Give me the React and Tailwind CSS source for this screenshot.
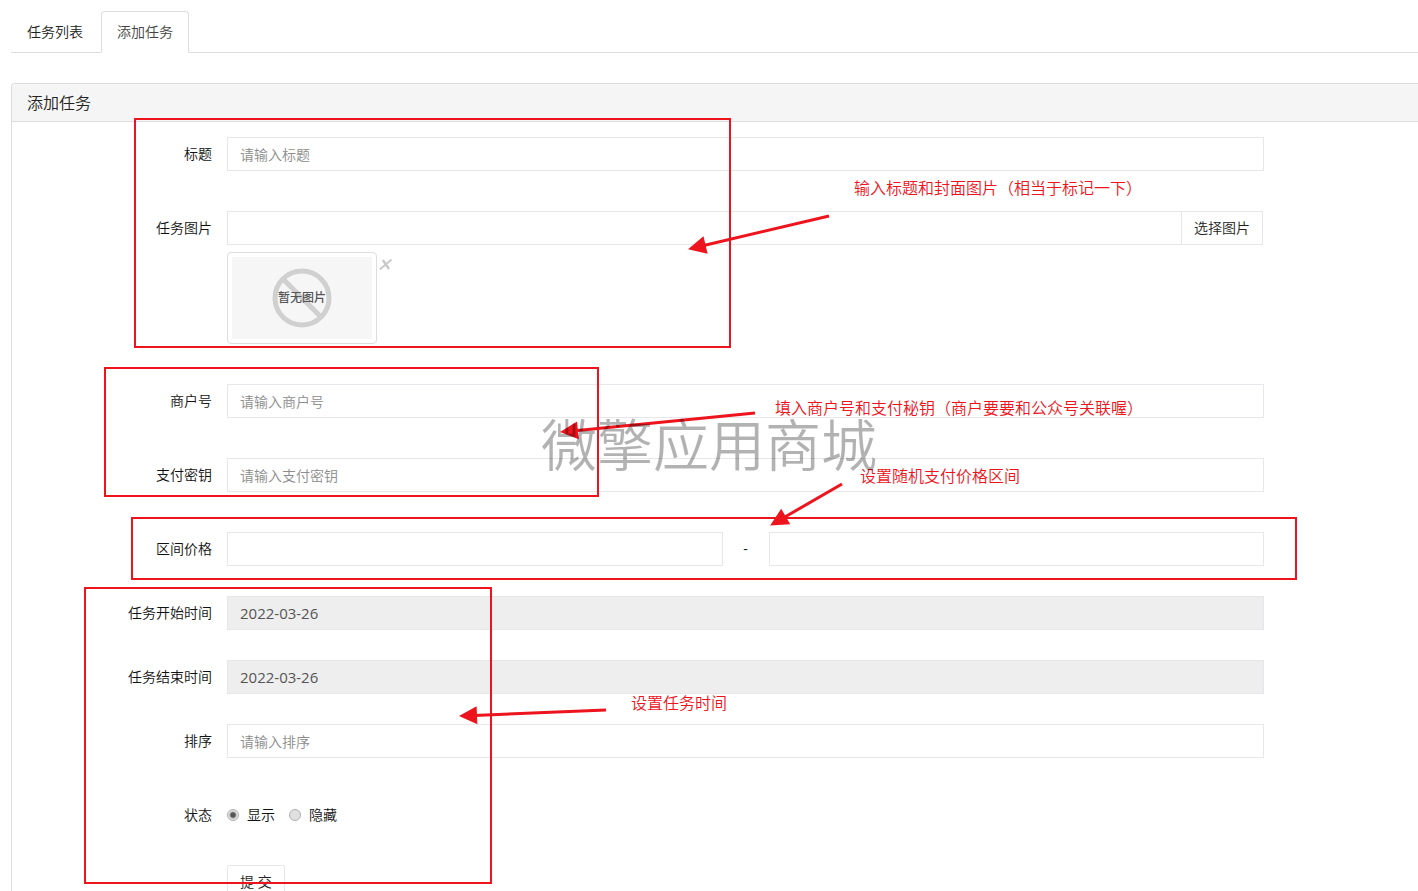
import React from 'react';

const inputClass =
  'block h-[34px] w-full min-w-0 border border-[#e7e7eb] bg-white px-3 text-sm text-[#555] outline-none placeholder:text-[#8c8c8c]';
const dateClass =
  'block h-[34px] w-full border border-[#e7e7eb] bg-[#eee] px-3 text-[15px] font-normal text-[#555] outline-none';
const radioClass =
  'h-3 w-3 shrink-0 appearance-none rounded-full border border-[#b0b0b0] bg-[#e0e0e0] checked:bg-[radial-gradient(circle,#555_0_2px,#e2e2e2_4px)]';

const Row = ({ label, htmlFor, className, children }) => (
  <div className={`flex items-start gap-[15px] ${className}`}>
    <label htmlFor={htmlFor} className="w-[200px] shrink-0 text-right text-sm leading-[34px] text-[#111]">
      {label}
    </label>
    <div className="min-w-0 flex-1">{children}</div>
  </div>
);

const NoPicture = () => (
  <div className="relative flex h-[82px] w-[140px] items-center justify-center bg-[#f6f6f6]">
    <svg className="absolute inset-0 h-full w-full" viewBox="0 0 140 82" fill="none" stroke="#d0d0d0" strokeWidth="5">
      <circle cx="70" cy="41" r="27" />
      <path d="M51 22l38 38" />
    </svg>
    <span className="relative text-xs font-medium text-[#555]">暂无图片</span>
  </div>
);

const Arrow = ({ from, to }) => {
  const angle = Math.atan2(to[1] - from[1], to[0] - from[0]);
  const len = Math.hypot(to[0] - from[0], to[1] - from[1]) + 1;
  return (
    <g transform={`translate(${from[0]} ${from[1]}) rotate(${(angle * 180) / Math.PI})`}>
      <path d={`M0 0H${len - 15}`} stroke="#ed141d" strokeWidth="3" />
      <path d={`M${len} 0l-18 -9v18z`} fill="#ed141d" />
    </g>
  );
};

const Notes = () => (
  <div className="pointer-events-none absolute inset-0 text-base leading-6 text-[#ed141d]">
    <div className="absolute left-[134px] top-[118px] h-[230px] w-[597px] border-2 border-[#ed141d]" />
    <div className="absolute left-[104px] top-[367px] h-[130px] w-[495px] border-2 border-[#ed141d]" />
    <div className="absolute left-[131px] top-[517px] h-[63px] w-[1166px] border-2 border-[#ed141d]" />
    <div className="absolute left-[84px] top-[587px] h-[297px] w-[408px] border-2 border-[#ed141d]" />
    <svg className="absolute left-0 top-0" width="900" height="800">
      <Arrow from={[829, 216]} to={[689, 249]} />
      <Arrow from={[755, 413]} to={[561, 432]} />
      <Arrow from={[842, 484]} to={[771, 525]} />
      <Arrow from={[606, 710]} to={[460, 716]} />
    </svg>
    <p className="absolute left-[854px] top-[176px] whitespace-nowrap">输入标题和封面图片（相当于标记一下）</p>
    <p className="absolute left-[775px] top-[396px] whitespace-nowrap">填入商户号和支付秘钥（商户要要和公众号关联喔）</p>
    <p className="absolute left-[860px] top-[464px] whitespace-nowrap">设置随机支付价格区间</p>
    <p className="absolute left-[631px] top-[691px] whitespace-nowrap">设置任务时间</p>
    <p className="absolute left-[541px] top-[412px] whitespace-nowrap text-[56px] leading-[64px] text-black/30">
      微擎应用商城
    </p>
  </div>
);

export default function App() {
  return (
    <div className="relative h-screen overflow-hidden bg-white pl-[11px] pt-[11px] font-['Open_Sans','Noto_Sans_CJK_SC',sans-serif] font-[350] text-[#222]">
      <nav className="flex border-b border-[#ddd] text-sm leading-5">
        <a href="#list" className="-mb-px border border-transparent px-[15px] py-[10px]">
          任务列表
        </a>
        <a
          href="#add"
          className="-mb-px ml-[2px] rounded-t border border-[#ddd] border-b-white bg-white px-[15px] py-[10px] text-[#444]"
        >
          添加任务
        </a>
      </nav>

      <section className="mt-[30px] rounded-tl border-l border-t border-[#ddd]">
        <h1 className="rounded-tl border-b border-[#ddd] bg-[#f5f5f5] px-[15px] pb-[6px] pt-2 text-base leading-[23px]">
          添加任务
        </h1>
        <form className="pr-[154px] pt-[15px]" onSubmit={(e) => e.preventDefault()}>
          <Row label="标题" htmlFor="title" className="mb-10">
            <input id="title" type="text" placeholder="请输入标题" className={inputClass} />
          </Row>

          <Row label="任务图片" htmlFor="image" className="mb-10">
            <div className="flex pr-px">
              <input id="image" type="text" className={inputClass} />
              <button type="button" className="-ml-px h-[34px] shrink-0 border border-[#e7e7eb] bg-white px-3 text-sm">
                选择图片
              </button>
            </div>
            <div className="mt-[7px] flex items-start">
              <div className="rounded border border-[#ddd] p-1">
                <NoPicture />
              </div>
              <button type="button" aria-label="删除" className="ml-[2px] mt-[6px]">
                <svg width="14" height="13" viewBox="0 0 14 13" fill="none" stroke="#c8c8c8">
                  <path d="M12.5 1.5L0.8 11.5" strokeWidth="1.8" />
                  <path d="M3.8 2l6.2 9" strokeWidth="2.4" />
                </svg>
              </button>
            </div>
          </Row>

          <Row label="商户号" htmlFor="merchant" className="mb-10">
            <input id="merchant" type="text" placeholder="请输入商户号" className={inputClass} />
          </Row>

          <Row label="支付密钥" htmlFor="secret" className="mb-10">
            <input id="secret" type="text" placeholder="请输入支付密钥" className={inputClass} />
          </Row>

          <Row label="区间价格" htmlFor="min" className="mb-[30px]">
            <div className="flex items-center">
              <input id="min" type="text" className={inputClass} />
              <span className="w-[46px] shrink-0 text-center text-sm font-normal">-</span>
              <input id="max" type="text" aria-label="最高价格" className={inputClass} />
            </div>
          </Row>

          <Row label="任务开始时间" htmlFor="start" className="mb-[30px]">
            <input id="start" type="text" readOnly defaultValue="2022-03-26" className={dateClass} />
          </Row>

          <Row label="任务结束时间" htmlFor="end" className="mb-[30px]">
            <input id="end" type="text" readOnly defaultValue="2022-03-26" className={dateClass} />
          </Row>

          <Row label="排序" htmlFor="sort" className="mb-10">
            <input id="sort" type="text" placeholder="请输入排序" className={inputClass} />
          </Row>

          <Row label="状态" htmlFor="show" className="mb-[33px]">
            <div className="flex h-[34px] items-center gap-[14px] text-sm text-[#111]">
              <label className="flex items-center gap-2">
                <input id="show" type="radio" name="status" defaultChecked className={radioClass} />
                显示
              </label>
              <label className="flex items-center gap-2">
                <input type="radio" name="status" className={radioClass} />
                隐藏
              </label>
            </div>
          </Row>

          <button
            type="submit"
            className="ml-[215px] h-[34px] rounded-xs border border-[#e7e7eb] bg-white px-3 text-sm"
          >
            提 交
          </button>
        </form>
      </section>

      <Notes />
    </div>
  );
}
